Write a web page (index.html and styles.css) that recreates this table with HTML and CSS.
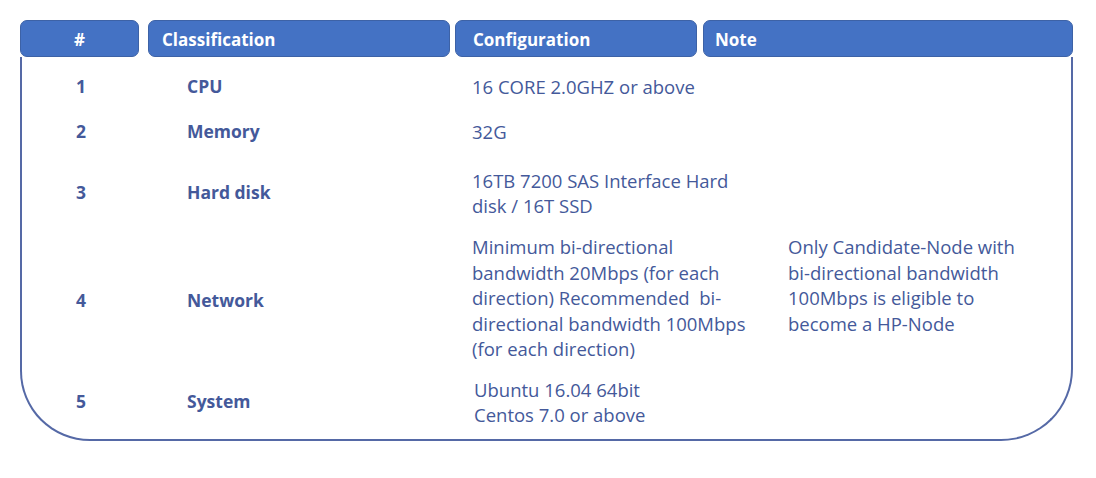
FILE: index.html
```html
<!DOCTYPE html>
<html lang="en">
<head>
<meta charset="utf-8">
<title>Node requirements</title>
<link rel="stylesheet" href="styles.css">
</head>
<body>
<div class="spec">
  <div class="spec-head">
    <div class="tab tab-num">#</div>
    <div class="tab tab-class">Classification</div>
    <div class="tab tab-conf">Configuration</div>
    <div class="tab tab-note">Note</div>
  </div>
  <div class="spec-body">
    <div class="cell num">1</div>
    <div class="cell cls">CPU</div>
    <div class="cell conf">16 CORE 2.0GHZ or above</div>
    <div class="cell note"></div>

    <div class="cell num">2</div>
    <div class="cell cls">Memory</div>
    <div class="cell conf">32G</div>
    <div class="cell note"></div>

    <div class="cell num">3</div>
    <div class="cell cls">Hard disk</div>
    <div class="cell conf">16TB 7200 SAS Interface Hard<br>disk / 16T SSD</div>
    <div class="cell note"></div>

    <div class="cell num">4</div>
    <div class="cell cls">Network</div>
    <div class="cell conf top">Minimum bi-directional<br>bandwidth 20Mbps (for each<br>direction) Recommended&nbsp; bi-<br>directional bandwidth 100Mbps<br>(for each direction)</div>
    <div class="cell note top">Only Candidate-Node with<br>bi-directional bandwidth<br>100Mbps is eligible to<br>become a HP-Node</div>

    <div class="cell num">5</div>
    <div class="cell cls">System</div>
    <div class="cell conf conf-sys">Ubuntu 16.04 64bit<br>Centos 7.0 or above</div>
    <div class="cell note"></div>
  </div>
</div>
</body>
</html>
```

FILE: styles.css
```css
html, body {
  margin: 0;
  padding: 0;
  background: #ffffff;
}

body {
  font-family: "Open Sans", "Liberation Sans", sans-serif;
  color: #44599a;
}

.spec {
  width: 1053px;
  margin: 20px 0 0 20px;
}

.spec-head {
  display: flex;
  height: 37px;
}

.tab {
  background: #4472c4;
  border: 1px solid #3d62a6;
  border-radius: 7px;
  color: #ffffff;
  font-weight: 700;
  font-size: 17px;
  display: flex;
  align-items: center;
  box-sizing: border-box;
  height: 37px;
  padding-top: 1px;
}

.tab-num { justify-content: center; width: 119px; }
.tab-class { margin-left: 9px; width: 302px; padding-left: 13px; }
.tab-conf { margin-left: 5px; width: 242px; padding-left: 17px; }
.tab-note { margin-left: 6px; width: 370px; padding-left: 11px; }

.spec-body {
  border: 2px solid #5569a6;
  border-top: none;
  border-radius: 0 0 72px 70px;
  height: 384px;
  box-sizing: border-box;
  padding-top: 9px;
  display: grid;
  grid-template-columns: 127px 306px 316px 1fr;
  grid-template-rows: 42px 48px 74px 141px 62px;
}

.cell {
  display: flex;
  align-items: center;
  font-size: 18.5px;
  line-height: 25.5px;
  white-space: nowrap;
}

.cell.top {
  align-items: flex-start;
  padding-top: 4px;
}

.num {
  justify-content: center;
  font-weight: 700;
  font-size: 17.5px;
  width: 118px;
}

.cls {
  font-weight: 700;
  font-size: 17.5px;
  padding-left: 38px;
}

.conf {
  padding-left: 17px;
}

.conf-sys {
  padding-left: 19px;
}

.note {
  padding-left: 17px;
}
```
